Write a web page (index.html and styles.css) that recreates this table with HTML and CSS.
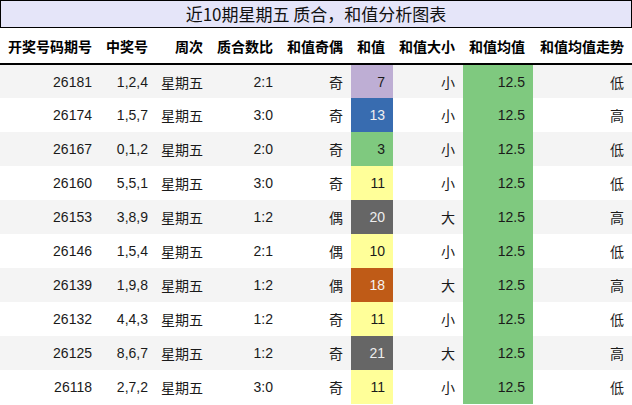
FILE: index.html
```html
<!DOCTYPE html>
<html lang="zh">
<head>
<meta charset="utf-8">
<title>近10期星期五 质合，和值分析图表</title>
<link rel="stylesheet" href="styles.css">
</head>
<body>
<div class="chart">
  <div class="title">近10期星期五 质合，和值分析图表</div>
  <table class="grid">
    <colgroup>
      <col class="c1"><col class="c2"><col class="c3"><col class="c4"><col class="c5"><col class="c6"><col class="c7"><col class="c8"><col class="c9">
    </colgroup>
    <thead>
      <tr><th>开奖号码期号</th><th>中奖号</th><th>周次</th><th>质合数比</th><th>和值奇偶</th><th>和值</th><th>和值大小</th><th>和值均值</th><th>和值均值走势</th></tr>
    </thead>
    <tbody>
      <tr><td>26181</td><td>1,2,4</td><td>星期五</td><td>2:1</td><td>奇</td><td class="s purple">7</td><td>小</td><td class="avg">12.5</td><td>低</td></tr>
      <tr><td>26174</td><td>1,5,7</td><td>星期五</td><td>3:0</td><td>奇</td><td class="s blue">13</td><td>小</td><td class="avg">12.5</td><td>高</td></tr>
      <tr><td>26167</td><td>0,1,2</td><td>星期五</td><td>2:0</td><td>奇</td><td class="s green">3</td><td>小</td><td class="avg">12.5</td><td>低</td></tr>
      <tr><td>26160</td><td>5,5,1</td><td>星期五</td><td>3:0</td><td>奇</td><td class="s yellow">11</td><td>小</td><td class="avg">12.5</td><td>低</td></tr>
      <tr><td>26153</td><td>3,8,9</td><td>星期五</td><td>1:2</td><td>偶</td><td class="s grey">20</td><td>大</td><td class="avg">12.5</td><td>高</td></tr>
      <tr><td>26146</td><td>1,5,4</td><td>星期五</td><td>2:1</td><td>偶</td><td class="s yellow">10</td><td>小</td><td class="avg">12.5</td><td>低</td></tr>
      <tr><td>26139</td><td>1,9,8</td><td>星期五</td><td>1:2</td><td>偶</td><td class="s brown">18</td><td>大</td><td class="avg">12.5</td><td>高</td></tr>
      <tr><td>26132</td><td>4,4,3</td><td>星期五</td><td>1:2</td><td>奇</td><td class="s yellow">11</td><td>小</td><td class="avg">12.5</td><td>低</td></tr>
      <tr><td>26125</td><td>8,6,7</td><td>星期五</td><td>1:2</td><td>奇</td><td class="s grey">21</td><td>大</td><td class="avg">12.5</td><td>高</td></tr>
      <tr><td>26118</td><td>2,7,2</td><td>星期五</td><td>3:0</td><td>奇</td><td class="s yellow">11</td><td>小</td><td class="avg">12.5</td><td>低</td></tr>
    </tbody>
  </table>
</div>
</body>
</html>
```
FILE: styles.css
```css
html, body {
  margin: 0;
  padding: 0;
  background: #ffffff;
}
body {
  font-family: "Liberation Sans", "Noto Sans CJK SC", sans-serif;
  color: #111111;
}
.chart {
  width: 632px;
}
.title {
  box-sizing: border-box;
  height: 28px;
  border: 1px solid #000000;
  background: #e5e5f9;
  font-family: "Noto Sans CJK SC", sans-serif;
  font-size: 17px;
  line-height: 25px;
  text-align: center;
  color: #111111;
}
.grid {
  width: 632px;
  table-layout: fixed;
  border-collapse: collapse;
  border-spacing: 0;
}
.c1 { width: 100px; }
.c2 { width: 56px; }
.c3 { width: 55px; }
.c4 { width: 70px; }
.c5 { width: 70px; }
.c6 { width: 42px; }
.c7 { width: 70px; }
.c8 { width: 70px; }
.c9 { width: 99px; }
.grid th {
  height: 36px;
  padding: 0 8px 0 0;
  text-align: right;
  font-family: "Noto Sans CJK SC", sans-serif;
  font-weight: bold;
  font-size: 14px;
  color: #000000;
  border-bottom: 2px solid #000000;
  white-space: nowrap;
  box-sizing: border-box;
}
.grid td {
  height: 34px;
  padding: 0 8px 0 0;
  text-align: right;
  font-size: 14px;
  color: #1a1a1a;
  white-space: nowrap;
  box-sizing: border-box;
}
.grid tbody tr:nth-child(odd) {
  background: #f4f4f4;
}
.grid tbody tr:nth-child(even) {
  background: #ffffff;
}
.grid td.avg { background: #7fc97f; }
.grid td.purple { background: #beaed4; }
.grid td.blue { background: #386cb0; color: #f0f0f0; }
.grid td.green { background: #7fc97f; }
.grid td.yellow { background: #ffff99; }
.grid td.grey { background: #666666; color: #eeeeee; }
.grid td.brown { background: #bf5b17; color: #f4f4f4; }
```
